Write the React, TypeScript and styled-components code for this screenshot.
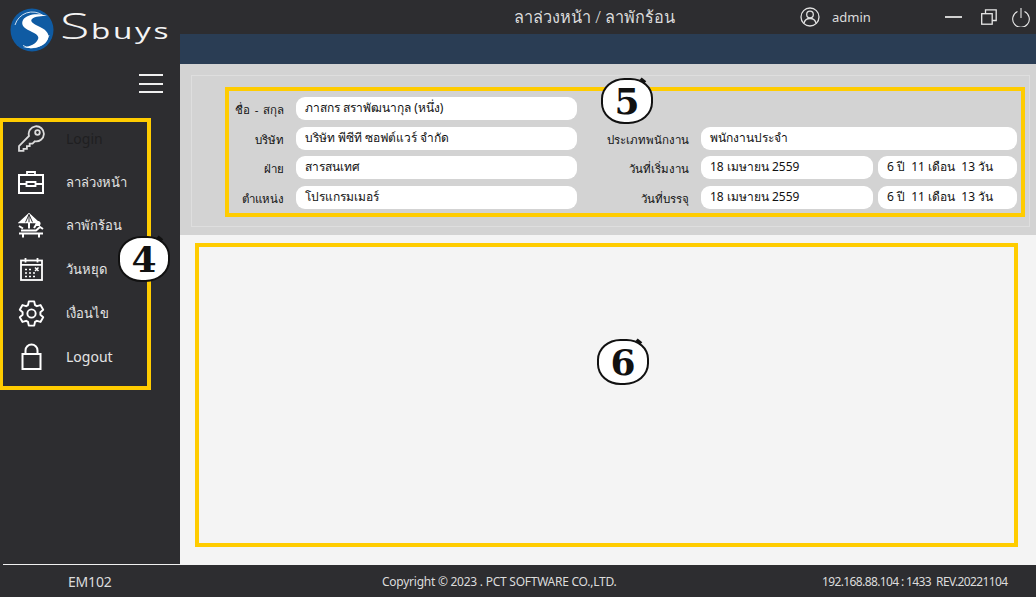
import React from 'react';
import styled, { createGlobalStyle } from 'styled-components';

const FONT = '"Noto Sans", Tahoma, "Liberation Sans", sans-serif';

const GlobalStyle = createGlobalStyle`
  html, body {
    margin: 0;
    padding: 0;
    background: #2d2d30;
  }
  * {
    box-sizing: border-box;
  }
`;

const KeyIcon = () => (
  <svg width="27" height="27" viewBox="0 0 27 27" fill="none" stroke="#dcdcdc" strokeWidth="1.800">
    <path d="M1 25.800v-4.800l10-10a7.600 7.600 0 1 1 5.800 5.300l-2.300 2.300h-2.800v2.600h-2.800v2.600H5.500v2z" />
    <circle cx="19.500" cy="7.500" r="2.300" />
  </svg>
);

const CaseIcon = () => (
  <svg width="26" height="23" viewBox="0 0 26 23" fill="none" stroke="#fff" strokeWidth="2">
    <rect x="1" y="4" width="24" height="18" />
    <path d="M9 4V1h8v3M1 13h7.500M17.500 13H25M8.500 11h9v4h-9z" strokeWidth="1.800" />
  </svg>
);

const BeachIcon = () => (
  <svg width="26" height="25" viewBox="0 0 26 25" fill="none" stroke="#fff" strokeWidth="1.500">
    <path d="M1.500 9.500 11 .8l9.500 8.700z" fill="#fff" stroke="#fff" />
    <path d="M7.500 9.300 11 1.500l3.500 7.800M11 1.500v8" stroke="#2d2d30" strokeWidth="1" />
    <path d="M11 9.500v6" strokeWidth="2" />
    <path d="M1 13l4 2.500M3 17.500h15l4-3.500 3 2" strokeWidth="2" />
    <circle cx="20" cy="10.500" r="1.800" fill="#fff" />
    <path d="M16 15l2-3 4 0" strokeWidth="2" />
    <path d="M1 20.500h24M5 20.500v4M21 20.500v4" strokeWidth="2" />
  </svg>
);

const CalendarIcon = () => (
  <svg width="23" height="23" viewBox="0 0 23 23" fill="none" stroke="#fff" strokeWidth="1.800">
    <rect x="1" y="2.500" width="21" height="19.500" />
    <path d="M1 6.800h21M5.500 0v4.500M17.500 0v4.500" />
    <path d="M5 11.500h2M9 11.500h2M5 15h2M9 15h2M13 15h2M5 18.500h2M9 18.500h2M13 18.500h2" strokeWidth="1.500" />
    <path d="M15 9.500l3.500 3.500M18.500 9.500 15 13" strokeWidth="1.500" />
  </svg>
);

const GearIcon = () => (
  <svg width="27" height="27" viewBox="0 0 24 24" fill="none" stroke="#fff" strokeWidth="1.700" strokeLinejoin="round">
    <path d="M9.600 1.200h4.800l.7 3.300 1.700 1 3.200-1 2.400 4.200-2.500 2.200v2.200l2.500 2.200-2.400 4.200-3.200-1-1.700 1-.7 3.300H9.600l-.7-3.300-1.700-1-3.200 1-2.400-4.200 2.500-2.200v-2.200L1.600 8.700 4 4.500l3.200 1 1.700-1z" />
    <circle cx="12" cy="12" r="3.700" />
  </svg>
);

const LockIcon = () => (
  <svg width="21" height="27" viewBox="0 0 21 27" fill="none" stroke="#fff" strokeWidth="2">
    <rect x="1.500" y="11" width="18" height="15" />
    <path d="M4.500 11V7.500a6 6 0 0 1 12 0V11" />
  </svg>
);

const UserIcon = () => (
  <svg width="20" height="20" viewBox="0 0 20 20" fill="none" stroke="#e0e0e0" strokeWidth="1.300">
    <circle cx="10" cy="10" r="9" />
    <circle cx="10" cy="7.500" r="3.300" />
    <path d="M4 16.500c.6-3.400 2.800-5 6-5s5.400 1.600 6 5" />
  </svg>
);

const RestoreIcon = () => (
  <svg width="16" height="16" viewBox="0 0 16 16" fill="none" stroke="#e8e8e8" strokeWidth="1.300">
    <rect x=".7" y="4.700" width="10.500" height="10.500" />
    <path d="M4.500 4.500V.8h10.700V11.500h-4" />
  </svg>
);

const PowerIcon = () => (
  <svg width="18" height="19" viewBox="0 0 18 19" fill="none" stroke="#e8e8e8" strokeWidth="1.100">
    <path d="M5.500 3.500a8.300 8.300 0 1 0 7 0M9 0v10" />
  </svg>
);

const LogoMark = () => (
  <svg width="44" height="44" viewBox="0 0 44 44">
    <circle cx="22" cy="22" r="21.500" fill="#0f5ba3" />
    <path d="M5 17A18 18 0 0 1 33 7.500" fill="none" stroke="#cfe0f0" strokeWidth="1" />
    <path d="M39 27A18 18 0 0 1 13 37.500" fill="none" stroke="#cfe0f0" strokeWidth="1" />
    <path
      d="M37 8C28 5 17 6 13 12c-3 6 3 9 9 12 6 3 8 5 5 9-3 4-9 6-14 6 10 3 22 0 25-8 2-6-3-10-10-13-6-3-8-5-6-7 3-3 10-3 15-3z"
      fill="#fff"
    />
  </svg>
);

const menu = [
  { label: 'Login', icon: <KeyIcon />, dim: true },
  { label: 'ลาล่วงหน้า', icon: <CaseIcon />, thai: true },
  { label: 'ลาพักร้อน', icon: <BeachIcon />, thai: true },
  { label: 'วันหยุด', icon: <CalendarIcon />, thai: true },
  { label: 'เงื่อนไข', icon: <GearIcon />, thai: true },
  { label: 'Logout', icon: <LockIcon /> },
];

const App: React.FC = () => (
  <Page>
    <GlobalStyle />
    <Body>
      <Sidebar>
        <Logo>
          <LogoMark />
          <Wordmark>S<small>buys</small></Wordmark>
        </Logo>
        <Burger>
          <span />
          <span />
          <span />
        </Burger>
        <Nav>
          {menu.map((item) => (
            <NavItem key={item.label} $dim={item.dim} $thai={item.thai}>
              <NavIcon>{item.icon}</NavIcon>
              {item.label}
            </NavItem>
          ))}
          <Badge $left={115} $top={114}>4</Badge>
        </Nav>
      </Sidebar>
      <Main>
        <TitleBar>
          <Title>ลาล่วงหน้า / ลาพักร้อน</Title>
          <UserBlock>
            <UserIcon />
            admin
          </UserBlock>
          <WindowButtons>
            <MinimizeBar />
            <RestoreIcon />
            <PowerIcon />
          </WindowButtons>
        </TitleBar>
        <Strip />
        <InfoSection>
          <GroupBox>
            <InfoForm>
              <FieldLabel>ชื่อ - สกุล</FieldLabel>
              <Field>ภาสกร สราพัฒนากุล (หนึ่ง)</Field>
              <span />
              <span />
              <FieldLabel>บริษัท</FieldLabel>
              <Field>บริษัท พีซีที ซอฟต์แวร์ จำกัด</Field>
              <FieldLabel>ประเภทพนักงาน</FieldLabel>
              <Field>พนักงานประจำ</Field>
              <FieldLabel>ฝ่าย</FieldLabel>
              <Field>สารสนเทศ</Field>
              <FieldLabel>วันที่เริ่มงาน</FieldLabel>
              <SplitFields>
                <Field>18 เมษายน 2559</Field>
                <Field>6 ปี&nbsp; 11 เดือน&nbsp; 13 วัน</Field>
              </SplitFields>
              <FieldLabel>ตำแหน่ง</FieldLabel>
              <Field>โปรแกรมเมอร์</Field>
              <FieldLabel>วันที่บรรจุ</FieldLabel>
              <SplitFields>
                <Field>18 เมษายน 2559</Field>
                <Field>6 ปี&nbsp; 11 เดือน&nbsp; 13 วัน</Field>
              </SplitFields>
              <Badge $left={372} $top={-13}>5</Badge>
            </InfoForm>
          </GroupBox>
        </InfoSection>
        <ContentSection>
          <ContentBox>
            <Badge $left={398} $top={92}>6</Badge>
          </ContentBox>
        </ContentSection>
      </Main>
    </Body>
    <Footer>
      <FooterCode>EM102</FooterCode>
      <FooterCopy>Copyright © 2023 . PCT SOFTWARE CO.,LTD.</FooterCopy>
      <FooterInfo>192.168.88.104 : 1433&nbsp; REV.20221104</FooterInfo>
    </Footer>
  </Page>
);

const Page = styled.div`
  width: 1036px;
  height: 597px;
  display: flex;
  flex-direction: column;
  overflow: hidden;
  font-family: ${FONT};
`;

const Body = styled.div`
  flex: 1;
  display: flex;
  min-height: 0;
`;

const Sidebar = styled.aside`
  position: relative;
  width: 180px;
  display: flex;
  flex-direction: column;
  background: #2d2d30;
  &::after {
    content: '';
    position: absolute;
    left: 3px;
    right: 0;
    bottom: 0;
    height: 1px;
    background: #f0f0f0;
  }
`;

const Logo = styled.div`
  height: 60px;
  padding: 8px 0 0 10px;
  display: flex;
  gap: 6px;
`;

const Wordmark = styled.div`
  height: 36px;
  color: #f4f4f4;
  font: 300 36px/36px "Open Sans", sans-serif;
  white-space: nowrap;
  transform: scaleX(1.5);
  transform-origin: left center;
  small {
    font-size: 21px;
    font-weight: 400;
    letter-spacing: 1.800px;
    margin-left: 1px;
  }
`;

const Burger = styled.div`
  align-self: flex-end;
  width: 24px;
  height: 19px;
  margin: 14px 17px 0 0;
  display: flex;
  flex-direction: column;
  justify-content: space-between;
  span {
    height: 2px;
    background: #f0f0f0;
  }
`;

const Nav = styled.nav`
  position: relative;
  width: 151px;
  height: 272px;
  margin-top: 25px;
  border: 4px solid #ffcc00;
  border-left-width: 3px;
  display: flex;
  flex-direction: column;
`;

const NavItem = styled.div<{ $dim?: boolean; $thai?: boolean }>`
  height: 43.600px;
  flex: none;
  display: flex;
  align-items: center;
  font-size: ${(props) => (props.$thai ? '13px' : '14px')};
  color: ${(props) => (props.$dim ? '#1f1f21' : '#e4e4e4')};
  &:first-child {
    margin-top: -5px;
  }
`;

const NavIcon = styled.span`
  width: 56px;
  margin-right: 7px;
  display: flex;
  justify-content: center;
  svg {
    display: block;
  }
`;

const Badge = styled.div<{ $left: number; $top: number }>`
  position: absolute;
  left: ${(props) => props.$left}px;
  top: ${(props) => props.$top}px;
  width: 52px;
  height: 46px;
  display: flex;
  align-items: center;
  justify-content: center;
  background: #fff;
  border: 2px solid #111;
  border-radius: 45% 43% 47% 45%;
  color: #111;
  font: 700 36px/1 "DejaVu Serif", serif;
  &::after {
    content: '';
    position: absolute;
    right: 5px;
    top: -1px;
    width: 6px;
    height: 3px;
    background: #111;
    transform: rotate(40deg);
  }
`;

const Main = styled.main`
  flex: 1;
  display: flex;
  flex-direction: column;
  min-width: 0;
`;

const TitleBar = styled.header`
  height: 34px;
  display: flex;
  align-items: center;
  background: #2d2d30;
  color: #dcdcdc;
`;

const Title = styled.div`
  margin-left: 334px;
  width: 165px;
  font-size: 16.300px;
  font-weight: 300;
  white-space: nowrap;
`;

const UserBlock = styled.div`
  margin-left: 121px;
  display: flex;
  align-items: center;
  gap: 12px;
  font-size: 13px;
`;

const WindowButtons = styled.div`
  margin-left: 74px;
  display: flex;
  align-items: center;
  gap: 15px;
`;

const MinimizeBar = styled.span`
  width: 17px;
  height: 2px;
  margin-right: 4px;
  background: #d0d0d0;
`;

const Strip = styled.div`
  height: 30px;
  background: #2a3d54;
`;

const InfoSection = styled.section`
  height: 171px;
  padding: 11px 6px 8px 11px;
  background: #d3d3d3;
`;

const GroupBox = styled.div`
  height: 100%;
  padding: 11px 4px 0 33px;
  border: 1px solid #dedede;
`;

const InfoForm = styled.div`
  position: relative;
  height: 130px;
  padding-top: 6px;
  border: 4px solid #ffcc00;
  display: grid;
  grid-template-columns: 67px 281px 124px 316px;
  grid-auto-rows: 23px;
  row-gap: 6.600px;
  font-size: 12px;
  color: #111;
`;

const FieldLabel = styled.div`
  padding-right: 12px;
  text-align: right;
  white-space: nowrap;
  font-size: 11.500px;
  word-spacing: 1.500px;
  line-height: 25px;
`;

const Field = styled.div`
  height: 23px;
  padding-left: 9px;
  background: #fff;
  border-radius: 9px;
  line-height: 21px;
  white-space: nowrap;
`;

const SplitFields = styled.div`
  display: grid;
  grid-template-columns: 172px 139px;
  gap: 5px;
`;

const ContentSection = styled.section`
  flex: 1;
  padding: 8px 18px 18px 15px;
  background: #f4f4f4;
`;

const ContentBox = styled.div`
  position: relative;
  height: 100%;
  border: 4px solid #ffcc00;
`;

const Footer = styled.footer`
  height: 32px;
  display: flex;
  align-items: center;
  background: #2d2d30;
  color: #dcdcdc;
`;

const FooterCode = styled.div`
  width: 382px;
  padding-left: 68px;
  font-size: 14px;
  letter-spacing: -0.200px;
`;

const FooterCopy = styled.div`
  width: 440px;
  font-size: 12px;
  letter-spacing: -0.250px;
  white-space: nowrap;
`;

const FooterInfo = styled.div`
  white-space: nowrap;
  font-size: 12px;
  letter-spacing: -0.620px;
`;

export default App;
